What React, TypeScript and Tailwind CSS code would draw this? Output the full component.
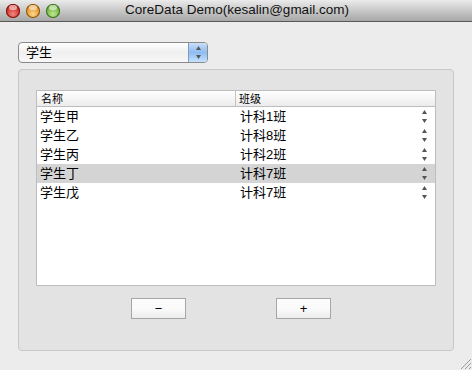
import React from "react";

const rows = [
  { name: "学生甲", cls: "计科1班" },
  { name: "学生乙", cls: "计科8班" },
  { name: "学生丙", cls: "计科2班" },
  { name: "学生丁", cls: "计科7班", selected: true },
  { name: "学生戊", cls: "计科7班" },
];

const font = { fontFamily: '"Liberation Sans", "Noto Sans CJK SC", sans-serif' };

function Light({ from, to, ring }: { from: string; to: string; ring: string }) {
  return (
    <div
      className="w-[14px] h-[14px] rounded-full relative"
      style={{
        background: `radial-gradient(circle at 50% 72%, ${to} 0%, ${from} 78%)`,
        boxShadow: `inset 0 0 0 1px ${ring}`,
      }}
    >
      <div className="absolute left-[3px] top-[1px] w-[8px] h-[5px] rounded-full bg-white/55" />
    </div>
  );
}

function Stepper() {
  return (
    <svg width="7" height="15" viewBox="0 0 7 15" className="block">
      <path d="M3.5 1 L6 5 L1 5 Z" fill="#555" />
      <path d="M3.5 14 L6 10 L1 10 Z" fill="#555" />
    </svg>
  );
}

export default function App() {
  return (
    <div className="w-[472px] h-[370px] bg-[#ececec] relative overflow-hidden" style={font}>
      {/* title bar */}
      <div className="h-[22px] bg-gradient-to-b from-[#ebebeb] to-[#a7a7a7] border-b border-[#585858] flex items-center relative">
        <div className="flex items-center gap-[6px] pl-[6px] relative z-10">
          <Light from="#c2150e" to="#f28980" ring="#7a1410" />
          <Light from="#d9800f" to="#fbd88c" ring="#8a5508" />
          <Light from="#5da32a" to="#bde890" ring="#3a6e1a" />
        </div>
        <div className="absolute inset-0 flex items-center justify-center text-[13.5px] text-[#111] pl-[2px]">
          CoreData Demo(kesalin@gmail.com)
        </div>
      </div>

      <div className="pl-[18px] pt-[20px]">
        {/* popup */}
        <div className="w-[190px] h-[21px] rounded-[4px] border border-[#8a8a8a] flex overflow-hidden bg-gradient-to-b from-[#ffffff] via-[#efefef] to-[#f8f8f8]">
          <div className="flex-1 flex items-center pl-[7px] text-[13px] text-black">学生</div>
          <div className="w-[19px] border-l border-[#7d9bc4] bg-gradient-to-b from-[#c9def7] via-[#8ebbf0] to-[#c5e3ff] flex items-center justify-center">
            <Stepper />
          </div>
        </div>

        {/* group box */}
        <div className="mt-[6px] w-[436px] h-[282px] rounded-[4px] border border-[#c8c8c8] bg-[#e3e3e3] pl-[17px] pt-[20px]">
          <div className="w-[400px] h-[196px] bg-white border border-[#bdbdbd]">
            <div className="h-[16px] flex border-b border-[#bdbdbd] bg-gradient-to-b from-[#ffffff] to-[#ececec] text-[11px] text-black">
              <div className="w-[199px] border-r border-[#c4c4c4] pl-[4px] leading-[16px]">名称</div>
              <div className="flex-1 pl-[3px] leading-[16px]">班级</div>
            </div>
            {rows.map((r, i) => (
              <div
                key={i}
                className={`h-[19px] flex items-center text-[13px] text-black ${r.selected ? "bg-[#d4d4d4]" : ""}`}
              >
                <div className="w-[200px] pl-[3px]">{r.name}</div>
                <div className="flex-1 pl-[3px]">{r.cls}</div>
                <div className="w-[7px] mr-[7px]">
                  <Stepper />
                </div>
              </div>
            ))}
          </div>

          <div className="flex mt-[12px]">
            <div className="ml-[95px] w-[55px] h-[21px] border border-[#a6a6a6] bg-gradient-to-b from-[#fbfbfb] via-[#fbfbfb] to-[#ececec] flex items-center justify-center text-[13px] text-black">
              −
            </div>
            <div className="ml-[90px] w-[55px] h-[21px] border border-[#a6a6a6] bg-gradient-to-b from-[#fbfbfb] via-[#fbfbfb] to-[#ececec] flex items-center justify-center text-[13px] text-black">
              +
            </div>
          </div>
        </div>
      </div>

      {/* resize grip */}
      <svg className="absolute right-0 bottom-0" width="14" height="14" viewBox="0 0 14 14">
        <path d="M13 3 L3 13 M13 7 L7 13 M13 11 L11 13" stroke="#9a9a9a" strokeWidth="1" />
      </svg>
    </div>
  );
}
